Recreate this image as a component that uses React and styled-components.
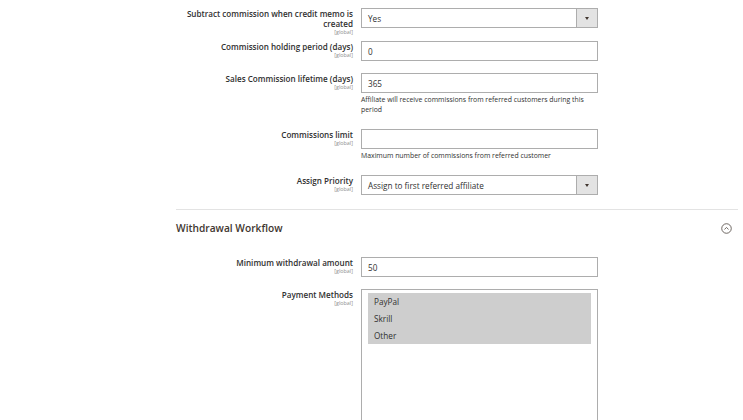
import React from "react";
import styled, { createGlobalStyle } from "styled-components";

const GlobalStyle = createGlobalStyle`
  body {
    margin: 0;
    background: #ffffff;
    font-family: "Open Sans", "Liberation Sans", sans-serif;
    color: #303030;
  }
`;

const Page = styled.div`
  width: 743px;
  height: 420px;
  overflow: hidden;
  padding: 8px 5px 0 176px;
  box-sizing: border-box;
`;

const Row = styled.div`
  display: grid;
  grid-template-columns: 177px 237px;
  column-gap: 8px;
  align-items: start;
  margin-bottom: ${({ $gap }) => $gap}px;
`;

const Label = styled.div`
  text-align: right;
  padding-top: 1px;
  font-size: 8.1px;
  line-height: 10px;
  font-weight: 600;
  color: #303030;
`;

const Scope = styled.div`
  font-size: 5.4px;
  line-height: 7px;
  font-weight: 400;
  color: #8f8f8f;
`;

const Control = styled.div`
  display: flex;
  flex-direction: column;
`;

const Input = styled.div`
  height: 20px;
  box-sizing: border-box;
  border: 1px solid #adadad;
  background: #ffffff;
  padding: 0 6px;
  display: flex;
  align-items: center;
  font-size: 8.2px;
  color: #303030;
`;

const Select = styled(Input)`
  justify-content: space-between;
  padding-right: 0;
`;

const ArrowBox = styled.span`
  width: 20px;
  height: 18px;
  background: #e3e3e3;
  border-left: 1px solid #adadad;
  display: flex;
  align-items: center;
  justify-content: center;
  &::after {
    content: "";
    border-left: 2.5px solid transparent;
    border-right: 2.5px solid transparent;
    border-top: 3px solid #41362f;
  }
`;

const Note = styled.div`
  margin-top: 2px;
  font-size: 6.9px;
  line-height: 10px;
  color: #303030;
`;

const Divider = styled.div`
  height: 1px;
  background: #e3e3e3;
  width: 562px;
`;

const SectionHead = styled.div`
  display: flex;
  align-items: center;
  justify-content: space-between;
  height: 36px;
  width: 562px;
  margin-bottom: 11px;
`;

const SectionTitle = styled.div`
  font-size: 10.2px;
  font-weight: 600;
  color: #41362f;
`;

const Collapse = styled.svg`
  width: 11px;
  height: 11px;
  margin-right: 6px;
`;

const MultiSelect = styled.div`
  height: 150px;
  box-sizing: border-box;
  border: 1px solid #adadad;
  padding: 3px 6px;
  background: #ffffff;
`;

const Option = styled.div`
  height: 17px;
  line-height: 17px;
  padding: 0 6px;
  background: ${({ $selected }) => ($selected ? "#cecece" : "transparent")};
  font-size: 8.2px;
  color: #303030;
`;

const Field = ({ label, lines, gap, note, children }) => (
  <Row $gap={gap}>
    <Label>
      {lines ? lines.map((l) => <div key={l}>{l}</div>) : label}
      <Scope>[global]</Scope>
    </Label>
    <Control>
      {children}
      {note && <Note>{note}</Note>}
    </Control>
  </Row>
);

const App = () => {
  return (
    <Page>
      <GlobalStyle />
      <Field lines={["Subtract commission when credit memo is", "created"]} gap={5}>
        <Select>
          Yes
          <ArrowBox />
        </Select>
      </Field>
      <Field label="Commission holding period (days)" gap={12}>
        <Input>0</Input>
      </Field>
      <Field
        label="Sales Commission lifetime (days)"
        gap={14}
        note="Affiliate will receive commissions from referred customers during this period"
      >
        <Input>365</Input>
      </Field>
      <Field
        label="Commissions limit"
        gap={14}
        note="Maximum number of commissions from referred customer"
      >
        <Input />
      </Field>
      <Field label="Assign Priority" gap={14}>
        <Select>
          Assign to first referred affiliate
          <ArrowBox />
        </Select>
      </Field>

      <Divider />
      <SectionHead>
        <SectionTitle>Withdrawal Workflow</SectionTitle>
        <Collapse viewBox="0 0 12 12">
          <circle cx="6" cy="6" r="5.2" fill="none" stroke="#514943" strokeWidth="0.9" />
          <path d="M3.8 7 L6 4.9 L8.2 7" fill="none" stroke="#514943" strokeWidth="0.9" />
        </Collapse>
      </SectionHead>

      <Field label="Minimum withdrawal amount" gap={12}>
        <Input>50</Input>
      </Field>
      <Field label="Payment Methods" gap={0}>
        <MultiSelect>
          <Option $selected>PayPal</Option>
          <Option $selected>Skrill</Option>
          <Option $selected>Other</Option>
        </MultiSelect>
      </Field>
    </Page>
  );
};

export default App;
